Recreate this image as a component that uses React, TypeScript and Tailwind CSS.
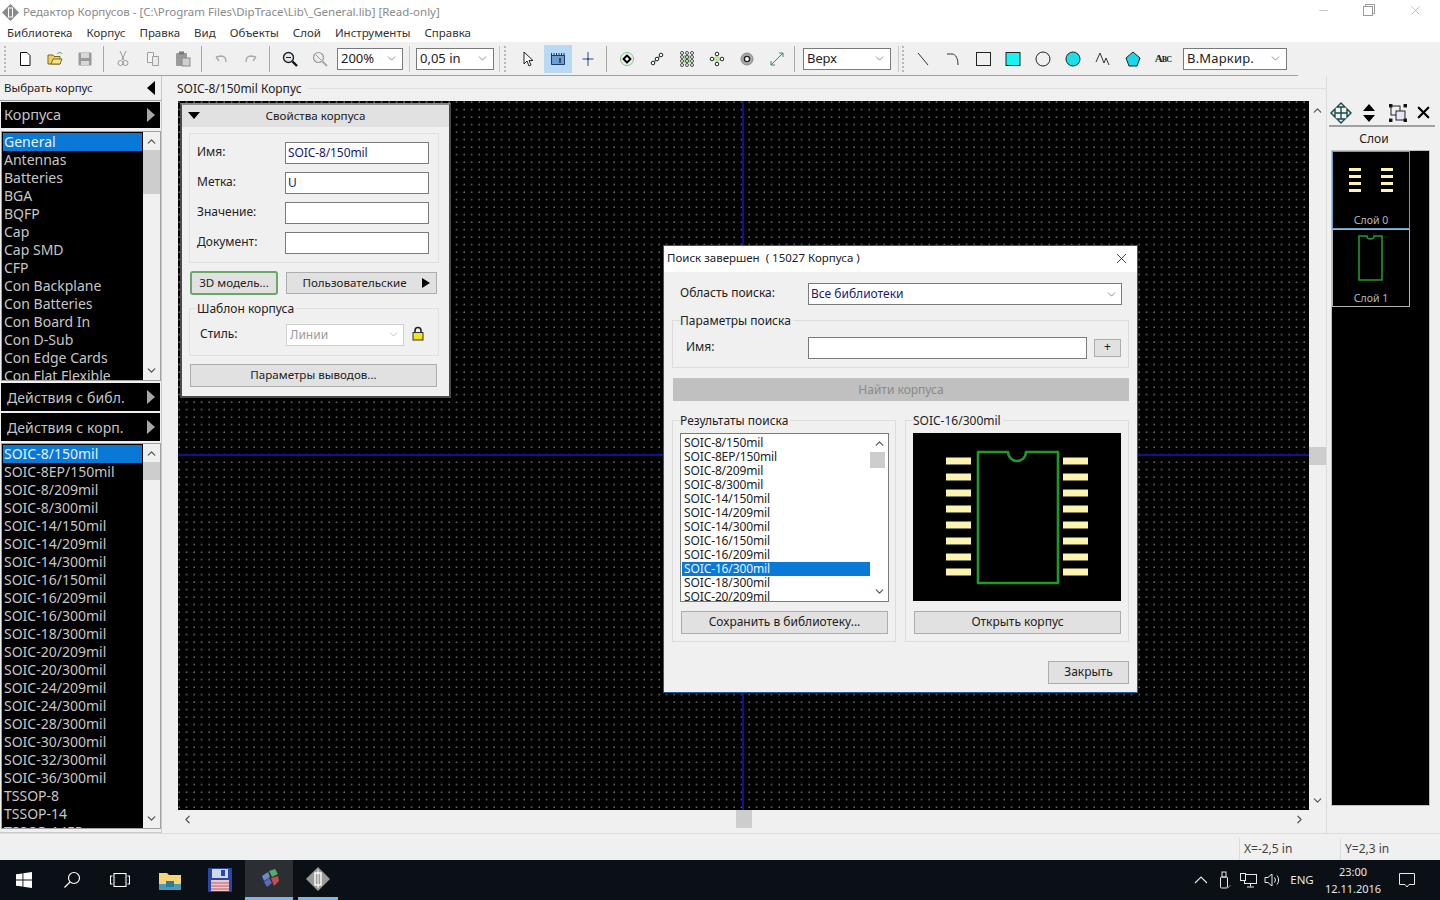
import type { ReactNode } from "react";
import { ChevronDown, ChevronUp, ChevronLeft, ChevronRight, X, Minus } from "lucide-react";

const family = "[font-family:'Noto_Sans','Liberation_Sans',sans-serif]";

const menu = ["Библиотека", "Корпус", "Правка", "Вид", "Объекты", "Слой", "Инструменты", "Справка"];
const libs = ["General", "Antennas", "Batteries", "BGA", "BQFP", "Cap", "Cap SMD", "CFP", "Con Backplane", "Con Batteries", "Con Board In", "Con D-Sub", "Con Edge Cards", "Con Flat Flexible"];
const parts = ["SOIC-8/150mil", "SOIC-8EP/150mil", "SOIC-8/209mil", "SOIC-8/300mil", "SOIC-14/150mil", "SOIC-14/209mil", "SOIC-14/300mil", "SOIC-16/150mil", "SOIC-16/209mil", "SOIC-16/300mil", "SOIC-18/300mil", "SOIC-20/209mil", "SOIC-20/300mil", "SOIC-24/209mil", "SOIC-24/300mil", "SOIC-28/300mil", "SOIC-30/300mil", "SOIC-32/300mil", "SOIC-36/300mil", "TSSOP-8", "TSSOP-14", "TSSOP-14EP"];
const results = ["SOIC-8/150mil", "SOIC-8EP/150mil", "SOIC-8/209mil", "SOIC-8/300mil", "SOIC-14/150mil", "SOIC-14/209mil", "SOIC-14/300mil", "SOIC-16/150mil", "SOIC-16/209mil", "SOIC-16/300mil", "SOIC-18/300mil", "SOIC-20/209mil"];

function Tool({ children, active }: { children: ReactNode; active?: boolean }) {
  return (
    <div className={`w-[28px] h-[28px] mx-px flex items-center justify-center ${active ? "bg-[#b9d8f3]" : ""}`}>
      <svg width="18" height="18" viewBox="0 0 18 18" fill="none">{children}</svg>
    </div>
  );
}

function Sep({ className = "" }: { className?: string }) {
  return <div className={`w-px h-[26px] bg-[#a8a8a8] ${className}`} />;
}

function Grip({ className = "" }: { className?: string }) {
  return <div className={`w-[2px] h-[26px] border-l-2 border-dotted border-[#b8b8b8] ${className}`} />;
}

function Combo({ w, text, className = "" }: { w: string; text: string; className?: string }) {
  return (
    <div className={`${w} h-[22px] border border-[#7a7a7a] bg-white flex items-center justify-between pl-[3px] pr-[4px] text-[13px] text-[#222] ${className}`}>
      <span>{text}</span>
      <ChevronDown size={13} strokeWidth={1.2} className="text-[#555]" />
    </div>
  );
}

function SideButton({ label, big, className = "" }: { label: string; big?: boolean; className?: string }) {
  return (
    <div className={`mx-px bg-black flex items-center justify-between pr-[5px] text-[#c4c4c4] ${big ? "h-[26px] pl-[3px] text-[14.5px]" : "h-[28px] pl-[6px] text-[14px] tracking-[0.1px]"} ${className}`}>
      <span>{label}</span>
      <span className="w-0 h-0 border-y-[7px] border-y-transparent border-l-[8px] border-l-[#a8a8a8]" />
    </div>
  );
}

function SideList({ items, h, thumbH }: { items: string[]; h: string; thumbH: string }) {
  return (
    <div className={`ml-px ${h} border border-[#a0a0a0] bg-white flex overflow-hidden`}>
      <div className="flex-1 bg-black overflow-hidden pt-px px-px">
        {items.map((t, i) => (
          <div key={t} className={`h-[18px] leading-[18px] pl-px text-[14px] whitespace-nowrap ${i === 0 ? "bg-[#0a78d7] text-[#e8f2fb]" : "text-[#c6c6c6]"}`}>{t}</div>
        ))}
      </div>
      <div className="w-[17px] bg-[#f0f0f0] flex flex-col items-center justify-between py-[3px] text-[#555]">
        <ChevronUp size={13} strokeWidth={2.4} />
        <div className="w-full flex-1 pt-[2px]">
          <div className={`${thumbH} w-full bg-[#cdcdcd]`} />
        </div>
        <ChevronDown size={13} strokeWidth={2.4} />
      </div>
    </div>
  );
}

function Field({ label, value }: { label: string; value?: string }) {
  return (
    <div className="flex items-center h-[22px]">
      <span className="w-[88px] text-[12px] pb-[3px] text-[#222]">{label}</span>
      <div className="w-[144px] h-[22px] border border-[#7a7a7a] bg-white pl-[2px] leading-[20px] text-[12px] tracking-[-0.1px] text-[#1a1a6e]">{value}</div>
    </div>
  );
}

function GrayButton({ children, className = "" }: { children: ReactNode; className?: string }) {
  return (
    <div className={`border border-[#adadad] bg-[#e1e1e1] flex items-center justify-center pb-[2px] text-[12px] text-[#222] ${className}`}>{children}</div>
  );
}

function Legend({ children, className = "" }: { children: ReactNode; className?: string }) {
  return <span className={`absolute -top-[7px] bg-[#f0f0f0] pr-[2px] leading-[14px] text-[12px] text-[#222] ${className}`}>{children}</span>;
}

function FootprintPreview() {
  const ys = [461, 477, 493, 509, 525, 541, 557, 572];
  return (
    <svg width="208" height="168" viewBox="913 433 208 168" className="block">
      <rect x="913" y="433" width="208" height="168" fill="#000" />
      {ys.map((y) => (
        <g key={y} fill="#fdf3b0">
          <rect x="946" y={y - 3.5} width="25" height="7" />
          <rect x="1063" y={y - 3.5} width="25" height="7" />
        </g>
      ))}
      <path d="M1008 452H978V583H1058V452H1026A9 9 0 0 1 1008 452Z" fill="none" stroke="#1f9a2a" strokeWidth="2.6" strokeLinejoin="round" />
    </svg>
  );
}

function Dialog() {
  return (
    <div className="absolute left-[663px] top-[245px] w-[475px] h-[448px] border border-[#1c5c9c] bg-[#f0f0f0] text-[12px] text-[#222]">
      <div className="h-[26px] bg-white flex items-center justify-between pl-[3px] pr-[7px] pb-[2px] text-[11.5px]">
        <span>Поиск завершен&nbsp; ( 15027 Корпуса )</span>
        <X size={17} strokeWidth={1.1} className="text-[#111]" />
      </div>
      <div className="px-[8px]">
        <div className="flex items-center mt-[11px] pl-[8px] h-[22px]">
          <span className="w-[128px] pb-[2px]">Область поиска:</span>
          <div className="w-[314px] h-[22px] border border-[#7a7a7a] bg-white flex items-center justify-between pl-[2px] pr-[3px] text-[#1a1a6e]">
            <span>Все библиотеки</span>
            <ChevronDown size={13} strokeWidth={1.2} className="text-[#555]" />
          </div>
        </div>
        <div className="relative mt-[15px] h-[48px] border border-[#dcdcdc] flex items-center pl-[13px]">
          <Legend className="left-[7px]">Параметры поиска</Legend>
          <span className="w-[122px] pb-[2px] mt-[8px]">Имя:</span>
          <div className="w-[279px] h-[22px] mt-[8px] border border-[#7a7a7a] bg-white" />
          <GrayButton className="w-[27px] h-[18px] ml-[7px] mt-[8px]">+</GrayButton>
        </div>
        <div className="ml-px mt-[10px] h-[23px] bg-[#c0c0c0] flex items-center justify-center text-[#8a8a8a]">Найти корпуса</div>
        <div className="flex gap-[9px] mt-[19px]">
          <div className="relative w-[224px] h-[222px] border border-[#dcdcdc] pt-[12px] px-[7px]">
            <Legend className="left-[7px]">Результаты поиска</Legend>
            <div className="w-[209px] h-[169px] border border-[#7a7a7a] bg-white flex overflow-hidden">
              <div className="w-[189px] h-[167px] pt-[2px] pl-px overflow-hidden tracking-[-0.12px]">
                {results.map((t, i) => (
                  <div key={t} className={`h-[14px] leading-[14px] pl-[2px] ${i === 9 ? "bg-[#0a78d7] text-[#e8f2fb]" : "text-[#222]"}`}>{t}</div>
                ))}
              </div>
              <div className="w-[18px] flex flex-col items-center justify-between py-[3px] text-[#555]">
                <ChevronUp size={13} strokeWidth={2.2} />
                <div className="flex-1 w-full pt-[2px]"><div className="h-[16px] w-[15px] bg-[#cdcdcd]" /></div>
                <ChevronDown size={13} strokeWidth={2.2} />
              </div>
            </div>
            <GrayButton className="w-[207px] h-[23px] mt-[9px] ml-px">Сохранить в библиотеку...</GrayButton>
          </div>
          <div className="relative w-[224px] h-[222px] border border-[#dcdcdc] pt-[12px] px-[7px]">
            <Legend className="left-[7px]">SOIC-16/300mil</Legend>
            <FootprintPreview />
            <GrayButton className="w-[207px] h-[23px] mt-[10px] ml-px">Открыть корпус</GrayButton>
          </div>
        </div>
        <div className="flex justify-end mt-[19px]">
          <GrayButton className="w-[81px] h-[23px]">Закрыть</GrayButton>
        </div>
      </div>
    </div>
  );
}

function PropsPanel() {
  return (
    <div className="absolute left-[2px] top-[2px] w-[271px] h-[295px] border-2 border-[#4a4a4a] border-t-[#8a8a8a] bg-[#f0f0f0] text-[12px] text-[#222]">
      <div className="relative h-[22px] bg-[#e1e1e1] flex items-center justify-center text-[11.6px]">
        <span className="absolute left-[6px] top-[7px] w-0 h-0 border-x-[6px] border-x-transparent border-t-[7px] border-t-black" />
        <span>Свойства корпуса</span>
      </div>
      <div className="ml-[7px] mr-[10px] mt-[6px] h-[130px] border border-[#e0e0e0] pl-[7px] pt-[8px] flex flex-col gap-[8px]">
        <Field label="Имя:" value="SOIC-8/150mil" />
        <Field label="Метка:" value="U" />
        <Field label="Значение:" />
        <Field label="Документ:" />
      </div>
      <div className="flex ml-[8px] mt-[8px] gap-[8px] items-center">
        <GrayButton className="w-[88px] h-[24px] !pb-0 !border-[#6aa86a] border-2 rounded-[3px] !text-[11.6px]">3D модель...</GrayButton>
        <GrayButton className="relative w-[151px] h-[22px] !pb-0 pr-[14px] !text-[11.6px]">
          Пользовательские
          <span className="absolute right-[6px] top-[5px] w-0 h-0 border-y-[5px] border-y-transparent border-l-[8px] border-l-black" />
        </GrayButton>
      </div>
      <div className="relative ml-[7px] mr-[10px] mt-[13px] h-[48px] border border-[#e0e0e0] flex items-center pl-[10px]">
        <Legend className="left-[7px]">Шаблон корпуса</Legend>
        <span className="w-[86px] pb-[1px] mt-[4px]">Стиль:</span>
        <div className="w-[118px] h-[22px] mt-[5px] border border-[#d0d0d0] bg-white flex items-center justify-between px-[3px] text-[#9a9a9a]">
          <span>Линии</span>
          <ChevronDown size={13} strokeWidth={1.2} className="text-[#aaa]" />
        </div>
        <svg width="12" height="15" viewBox="0 0 12 15" className="ml-[8px] mt-[2px]">
          <path d="M3 7V4.5a3 3 0 0 1 6 0V7" fill="none" stroke="#222" strokeWidth="1.6" />
          <rect x="1" y="6.5" width="10" height="7.5" fill="#f5e21f" stroke="#333" />
        </svg>
      </div>
      <GrayButton className="ml-[8px] mt-[8px] w-[247px] h-[23px] !pb-[1px] !text-[11.6px]">Параметры выводов...</GrayButton>
    </div>
  );
}

function LayerThumb({ label, active, children }: { label: string; active?: boolean; children: ReactNode }) {
  return (
    <div className={`relative w-[78px] h-[78px] border ${active ? "border-[#6f9ac4]" : "border-[#b4b4b4]"} flex flex-col items-center`}>
      <svg width="76" height="60" viewBox="0 0 76 60">{children}</svg>
      <span className="text-[10.5px] leading-[12px] mt-[2px] text-[#b8b8b8]">{label}</span>
    </div>
  );
}

function Taskbar() {
  return (
    <div className="h-[40px] bg-[#0b1016] flex items-center text-white">
      <div className="w-[48px] flex justify-center">
        <svg width="16" height="16" viewBox="0 0 16 16" fill="#fff"><path d="M0 2.3 6.5 1.4V7.5H0ZM7.4 1.3 16 0V7.5H7.4ZM0 8.4H6.5V14.6L0 13.7ZM7.4 8.4H16V16L7.4 14.7Z" /></svg>
      </div>
      <div className="w-[48px] flex justify-center">
        <svg width="18" height="18" viewBox="0 0 18 18" fill="none" stroke="#fff" strokeWidth="1.2"><circle cx="11" cy="7" r="5.5" /><path d="M7 11 1.5 16.5" /></svg>
      </div>
      <div className="w-[48px] flex justify-center">
        <svg width="20" height="14" viewBox="0 0 20 14" fill="none" stroke="#fff" strokeWidth="1.1"><rect x="4" y="0.5" width="12" height="13" /><path d="M2.5 3H.5V11H2.5M17.5 3H19.5V11H17.5" /></svg>
      </div>
      <div className="w-[52px] flex justify-center">
        <svg width="22" height="19" viewBox="0 0 22 19"><path d="M0 2H8L10 4H22V19H0Z" fill="#f4d675" /><rect x="0" y="13" width="22" height="6" fill="#4b9bb5" /><rect x="7" y="10" width="8" height="6" fill="#2f7c9c" /></svg>
      </div>
      <div className="w-[48px] flex justify-center">
        <svg width="24" height="24" viewBox="0 0 24 24"><rect width="24" height="24" rx="1" fill="#2a47a8" /><rect x="4" y="1" width="16" height="9" fill="#cfd8ec" /><rect x="13" y="2" width="4" height="6" fill="#2a47a8" /><rect x="3" y="12" width="18" height="11" fill="#f0c8c8" /><path d="M3 15H21M3 18H21M3 21H21" stroke="#b45a6a" /></svg>
      </div>
      <div className="w-[48px] h-full bg-[#2b2e33] flex items-center justify-center border-b-[3px] border-[#76b9ed] ml-[1px]">
        <svg width="24" height="20" viewBox="0 0 24 20"><path d="M5 7 11 3 13 8 7 12Z" fill="#6a8cc8" /><path d="M12 2 18 0 21 5 15 8Z" fill="#5aa86a" /><path d="M7 13 12 9 15 14 10 18Z" fill="#5a6ab8" /><path d="M14 9 21 7 22 12 17 17Z" fill="#c84a4a" /></svg>
      </div>
      <div className="w-[40px] h-full ml-[5px] flex items-center justify-center border-b-[3px] border-[#76b9ed]">
        <svg width="24" height="24" viewBox="0 0 24 24"><path d="M12 0 24 12 12 24 0 12Z" fill="#9a9a9a" /><rect x="9" y="6" width="6" height="12" fill="none" stroke="#fff" strokeWidth="1.4" /><path d="M12 3V21" stroke="#fff" /></svg>
      </div>
      <div className="flex-1" />
      <div className="flex items-center text-[#e8e8e8]">
        <svg width="14" height="8" viewBox="0 0 14 8" fill="none" stroke="#e8e8e8" strokeWidth="1.1" className="mr-[11px]"><path d="M1 7 7 1 13 7" /></svg>
        <svg width="12" height="18" viewBox="0 0 12 18" fill="none" stroke="#e8e8e8" className="mr-[9px]"><rect x="1.5" y="6" width="7" height="11" rx="1" /><rect x="3" y="1" width="4" height="5" /><path d="M7 16 9 17 11.5 14" stroke="#888" /></svg>
        <svg width="17" height="15" viewBox="0 0 17 15" fill="none" stroke="#e8e8e8" className="mr-[7px]"><rect x="4.5" y="1.5" width="12" height="9" /><rect x="0.5" y="0.5" width="5" height="7" fill="#0b1016" /><path d="M10.5 10.5V13.5M7 14H14" /></svg>
        <svg width="17" height="14" viewBox="0 0 17 14" fill="none" stroke="#e8e8e8" className="mr-[6px]"><path d="M1 4.5H4L8 1V13L4 9.5H1Z" /><path d="M10.5 4.5a4 4 0 0 1 0 5M13 2.5a7 7 0 0 1 0 9" /></svg>
        <span className="text-[11.5px] w-[30px] text-center">ENG</span>
        <div className="w-[60px] ml-[6px] flex flex-col items-center text-[11px] leading-[17px]">
          <span>23:00</span>
          <span>12.11.2016</span>
        </div>
        <svg width="16" height="16" viewBox="0 0 16 16" fill="none" stroke="#e8e8e8" className="ml-[16px] mr-[25px]"><path d="M.5 1.5H15.5V12.5H10L8 15 6 12.5H.5Z" /></svg>
      </div>
    </div>
  );
}

export default function App() {
  return (
    <div className={`relative w-[1440px] h-[900px] overflow-hidden flex flex-col bg-[#f0f0f0] ${family}`}>
      {/* title */}
      <div className="h-[24px] bg-white flex items-center justify-between">
        <div className="flex items-center pl-[2px] text-[11.5px] text-[#8a8a8a]">
          <svg width="17" height="17" viewBox="0 0 17 17" className="mr-[4px]">
            <path d="M8.5 0 17 8.5 8.5 17 0 8.5Z" fill="#8a8a8a" />
            <rect x="6.5" y="4" width="4" height="9" fill="none" stroke="#fff" />
          </svg>
          <span>Редактор Корпусов - [C:\Program Files\DipTrace\Lib\_General.lib] [Read-only]</span>
        </div>
        <div className="flex items-center text-[#9a9a9a] pr-[17px] mb-[4px] gap-[33px]">
          <Minus size={13} strokeWidth={1} />
          <svg width="12" height="12" viewBox="0 0 12 12" fill="none" stroke="#9a9a9a"><rect x="0.5" y="2.5" width="9" height="9" /><path d="M2.5 2.5V.5H11.5V9.5H9.5" /></svg>
          <X size={15} strokeWidth={1} />
        </div>
      </div>
      {/* menu */}
      <div className="h-[18px] bg-white flex items-center pl-[7px] gap-[14px] text-[11.5px] text-[#333]">
        {menu.map((m) => <span key={m}>{m}</span>)}
      </div>
      {/* toolbar */}
      <div className="h-[34px] w-[1298px] flex items-center pl-[2px] border-b border-[#a0a0a0] shrink-0">
        <Grip className="ml-[2px] mr-[4px]" />
        <Tool><path d="M4.5 2.5H11L14 5.5V15.5H4.5Z" fill="#fff" stroke="#111" /></Tool>
        <Tool><path d="M2 5H7L8 6.5H14V14H2Z" fill="#f0d060" stroke="#7a6a20" /><path d="M5 14 7 9H16L14 14Z" fill="#f6e48a" stroke="#7a6a20" /><path d="M11 4C13 2 15 2 16 4" stroke="#4a9a4a" /></Tool>
        <Tool><rect x="2.5" y="2.5" width="13" height="13" rx="1" fill="#9a9a9a" /><rect x="5" y="3" width="8" height="5" fill="#d8d8d8" /><rect x="5" y="11" width="8" height="4" fill="#d8d8d8" /></Tool>
        <Sep className="ml-[3px] mr-[4px]" />
        <Tool><path d="M6 1 10 10M12 1 8 10" stroke="#9a9a9a" /><circle cx="6.5" cy="13" r="2.5" stroke="#9a9a9a" /><circle cx="11.5" cy="13" r="2.5" stroke="#9a9a9a" /></Tool>
        <Tool><path d="M3.5 2.5H9.5V12.5H3.5Z" fill="#f4f4f4" stroke="#a0a0a0" /><path d="M8.5 6.5H14.5V15.5H8.5Z" fill="#eaeaea" stroke="#a0a0a0" /></Tool>
        <Tool><rect x="2" y="3" width="11" height="13" rx="1" fill="#9a9a9a" /><rect x="5" y="1.5" width="5" height="3" fill="#777" /><rect x="8" y="8" width="8" height="8" fill="#cfcfcf" stroke="#888" /></Tool>
        <Sep className="ml-[3px] mr-[4px]" />
        <Tool><path d="M4 7 7 11M4 7 9 6C13 6 14 9 14 12" stroke="#a8a8a8" strokeWidth="1.3" /></Tool>
        <Tool><path d="M14 7 11 11M14 7 9 6C5 6 4 9 4 12" stroke="#a8a8a8" strokeWidth="1.3" /></Tool>
        <Sep className="ml-[3px] mr-[5px]" />
        <Tool><circle cx="7.5" cy="7.5" r="5" stroke="#222" strokeWidth="1.4" fill="#dfe6ee" /><path d="M11.5 11.5 16 16" stroke="#111" strokeWidth="2.4" /><path d="M5 7.5H10" stroke="#222" /></Tool>
        <Tool><circle cx="7.5" cy="7.5" r="5" stroke="#9a9a9a" strokeWidth="1.2" fill="#eee" /><path d="M11.5 11.5 16 16" stroke="#a8a8a8" strokeWidth="2" /><path d="M5 5 10 10" stroke="#9a9a9a" /></Tool>
        <Combo w="w-[66px] ml-[2px]" text="200%" />
        <Sep className="!bg-[#c8c8c8] mx-[6px]" />
        <Combo w="w-[78px]" text="0,05 in" />
        <Sep className="!bg-[#c8c8c8] ml-[5px]" />
        <Grip className="ml-[4px] mr-[7px]" />
        <Tool><path d="M5 2V14L8 11 10 16 12 15 10 10.5H14Z" fill="#fff" stroke="#222" /></Tool>
        <Tool active><path d="M2.5 5.5H15.5V14.5H2.5Z" fill="#6a9ed4" stroke="#1a3a6a" /><path d="M2.5 3V6M5 3V5.5M7.5 3V6M10 3V5.5M12.5 3V6M15 3V6" stroke="#1a3a6a" /><path d="M11 8V13" stroke="#111" strokeWidth="1.2" /></Tool>
        <Tool><path d="M9 2V16M3.5 9H14.5" stroke="#2a4a8a" /><circle cx="9" cy="9" r="1" fill="#2a4a8a" /></Tool>
        <Sep className="ml-[3px] mr-[5px]" />
        <Tool><circle cx="9" cy="9" r="6.5" stroke="#7ac87a" /><path d="M9 5.5 12.5 9 9 12.5 5.5 9Z" fill="#fff" stroke="#000" strokeWidth="2" strokeLinejoin="round" /></Tool>
        <Tool><path d="M4 14 14 4" stroke="#6ab86a" strokeWidth="2" /><circle cx="5" cy="13" r="1.8" fill="#fff" stroke="#222" /><circle cx="9" cy="9" r="1.8" fill="#fff" stroke="#222" /><circle cx="13" cy="5" r="1.8" fill="#fff" stroke="#222" /></Tool>
        <Tool><rect x="6" y="5" width="6" height="8" fill="#9ad88a" />{[4, 9, 14].flatMap((x) => [3, 7, 11, 15].map((y) => <circle key={`${x}-${y}`} cx={x} cy={y} r="1.5" fill="#fff" stroke="#222" strokeWidth="0.8" />))}</Tool>
        <Tool><circle cx="9" cy="9" r="3" fill="#b8e8a8" /><circle cx="9" cy="4" r="1.8" fill="#fff" stroke="#222" /><circle cx="9" cy="14" r="1.8" fill="#fff" stroke="#222" /><circle cx="4" cy="9" r="1.8" fill="#fff" stroke="#222" /><circle cx="14" cy="9" r="1.8" fill="#fff" stroke="#222" /></Tool>
        <Tool><circle cx="9" cy="9" r="6" fill="#a8a8a8" stroke="#888" /><circle cx="9" cy="9" r="2.6" fill="#fff" stroke="#222" strokeWidth="1.4" /></Tool>
        <Tool><path d="M3 15 15 3M15 3H11M15 3V7M3 15H7M3 15V11" stroke="#2a8a7a" /></Tool>
        <Sep className="ml-[2px] mr-[8px]" />
        <Combo w="w-[88px]" text="Верх" />
        <Sep className="!bg-[#c8c8c8] ml-[7px]" />
        <Grip className="ml-[3px] mr-[4px]" />
        <Tool><path d="M4 3 14 15" stroke="#333" /></Tool>
        <Tool><path d="M3 4H8C12 4 14 9 14 15" stroke="#333" /></Tool>
        <Tool><rect x="2.5" y="2.5" width="14" height="13" stroke="#222" /></Tool>
        <Tool><rect x="2" y="2.5" width="14" height="13" fill="#19f2f2" stroke="#222" /></Tool>
        <Tool><circle cx="9" cy="9" r="7" stroke="#222" /></Tool>
        <Tool><circle cx="9" cy="9" r="7" fill="#19e0e8" stroke="#222" /></Tool>
        <Tool><path d="M2 12 6 3 10 13 12 8 15 15" stroke="#333" /></Tool>
        <Tool><path d="M9 2 16 8 13 16H5L2 8Z" fill="#19d8e8" stroke="#222" /></Tool>
        <div className="w-[28px] h-[28px] mx-px flex items-center justify-center text-[11px] font-bold text-[#222] tracking-[-0.8px] [font-variant:small-caps] [font-family:'Liberation_Serif',serif]">Abc</div>
        <Combo w="w-[104px] ml-[5px]" text="В.Маркир." className="tracking-[0.2px]" />
      </div>
      {/* workspace */}
      <div className="relative flex h-[757px] shrink-0">
        <div className="w-[162px] shrink-0 border-r border-[#c8c8c8] border-b">
          <div className="h-[25px] flex items-center justify-between pl-[4px] pr-[6px] text-[11.5px] text-[#222] border-b border-[#a0a0a0]">
            <span>Выбрать корпус</span>
            <span className="w-0 h-0 border-y-[7px] border-y-transparent border-r-[8px] border-r-black" />
          </div>
          <SideButton label="Корпуса" big className="mt-px" />
          <div className="h-[3px]" />
          <SideList items={libs} h="h-[250px]" thumbH="h-[44px]" />
          <SideButton label="Действия с библ." className="mt-[2px]" />
          <SideButton label="Действия с корп." className="mt-[2px]" />
          <div className="h-[2px]" />
          <SideList items={parts} h="h-[386px]" thumbH="h-[18px]" />
        </div>
        <div className="w-[16px] shrink-0" />
        <div className="flex flex-col w-[1149px] shrink-0 border-r border-[#dcdcdc]">
          <div className="h-[25px] flex items-center text-[12px] text-[#222]">
            <span className="-ml-px">SOIC-8/150mil Корпус</span>
            <div className="flex-1 h-px ml-[6px] bg-[#e0e0e0]" />
          </div>
          <div className="flex h-[709px]">
            <div className="relative w-[1131px] bg-black bg-[radial-gradient(circle_at_1px_1px,#8a8a8a_0.55px,transparent_0.8px)] bg-[length:7.5px_7.5px]">
              <div className="absolute left-[564px] top-0 bottom-0 w-[2px] bg-[#101090]" />
              <div className="absolute left-0 right-0 top-[353px] h-[2px] bg-[#101090]" />
              <PropsPanel />
            </div>
            <div className="w-[17px] flex flex-col items-center justify-between py-[3px] text-[#555] bg-[#f0f0f0]">
              <ChevronUp size={13} strokeWidth={2.2} />
              <div className="w-full h-[18px] bg-[#cdcdcd]" />
              <ChevronDown size={13} strokeWidth={2.2} />
            </div>
          </div>
          <div className="h-[18px] w-[1131px] flex items-center justify-between px-[3px] text-[#555]">
            <ChevronLeft size={13} strokeWidth={2.2} />
            <div className="w-[16px] h-full bg-[#cdcdcd]" />
            <ChevronRight size={13} strokeWidth={2.2} />
          </div>
        </div>
        <div className="w-[2px] shrink-0" />
        <div className="w-[106px] shrink-0 pt-[24px]">
          <div className="h-[27px] flex items-center border-b-2 border-[#a0a0a0] pl-[1px] gap-[10px]">
            <svg width="22" height="22" viewBox="0 0 22 22" fill="none" stroke="#1a4a4a" strokeWidth="1.4"><path d="M11 1 7 5H15ZM11 21 7 17H15ZM1 11 5 7V15ZM21 11 17 7V15Z" fill="#d8f0f0" /><path d="M11 5V17M5 11H17" /></svg>
            <svg width="14" height="20" viewBox="0 0 14 20" fill="#000"><path d="M7 1 13 8H1ZM7 19 13 12H1Z" /></svg>
            <svg width="18" height="18" viewBox="0 0 18 18" className="ml-[3px]" fill="none" stroke="#222"><rect x="2" y="2" width="9" height="9" /><rect x="7" y="7" width="9" height="9" fill="#e6e6f8" /><rect x="0" y="0" width="3" height="3" fill="#000" /><rect x="15" y="0" width="3" height="3" fill="#000" /><rect x="0" y="15" width="3" height="3" fill="#000" /><rect x="15" y="15" width="3" height="3" fill="#000" /></svg>
            <X size={19} strokeWidth={2.8} className="text-black -ml-[3px]" />
          </div>
          <div className="h-[23px] flex items-center justify-center pr-[16px] text-[12px] text-[#222]">Слои</div>
          <div className="h-[656px] ml-[2px] w-[99px] bg-black border border-[#c0c0c0] text-[#b8b8b8]">
            <LayerThumb label="Слой 0" active>
              <g fill="#fdf3b0">
                {[16, 23, 30, 37].map((y) => (
                  <g key={y}>
                    <rect x="16" y={y} width="12" height="3" />
                    <rect x="48" y={y} width="12" height="3" />
                  </g>
                ))}
              </g>
            </LayerThumb>
            <LayerThumb label="Слой 1">
              <path d="M34 6H26V50H49V6H41A3.5 3 0 0 1 34 6Z" fill="none" stroke="#1f9a2a" strokeWidth="1.6" />
            </LayerThumb>
          </div>
        </div>
      </div>
      {/* status */}
      <div className="flex-1 flex items-end text-[12px] text-[#444] border-t border-[#dcdcdc]">
        <div className="ml-[1239px] w-[101px] h-[22px] border-l border-[#dcdcdc] pl-[4px] flex items-center">X=-2,5 in</div>
        <div className="w-[100px] h-[22px] border-l border-[#dcdcdc] pl-[4px] flex items-center">Y=2,3 in</div>
      </div>
      <Taskbar />
      <Dialog />
    </div>
  );
}
